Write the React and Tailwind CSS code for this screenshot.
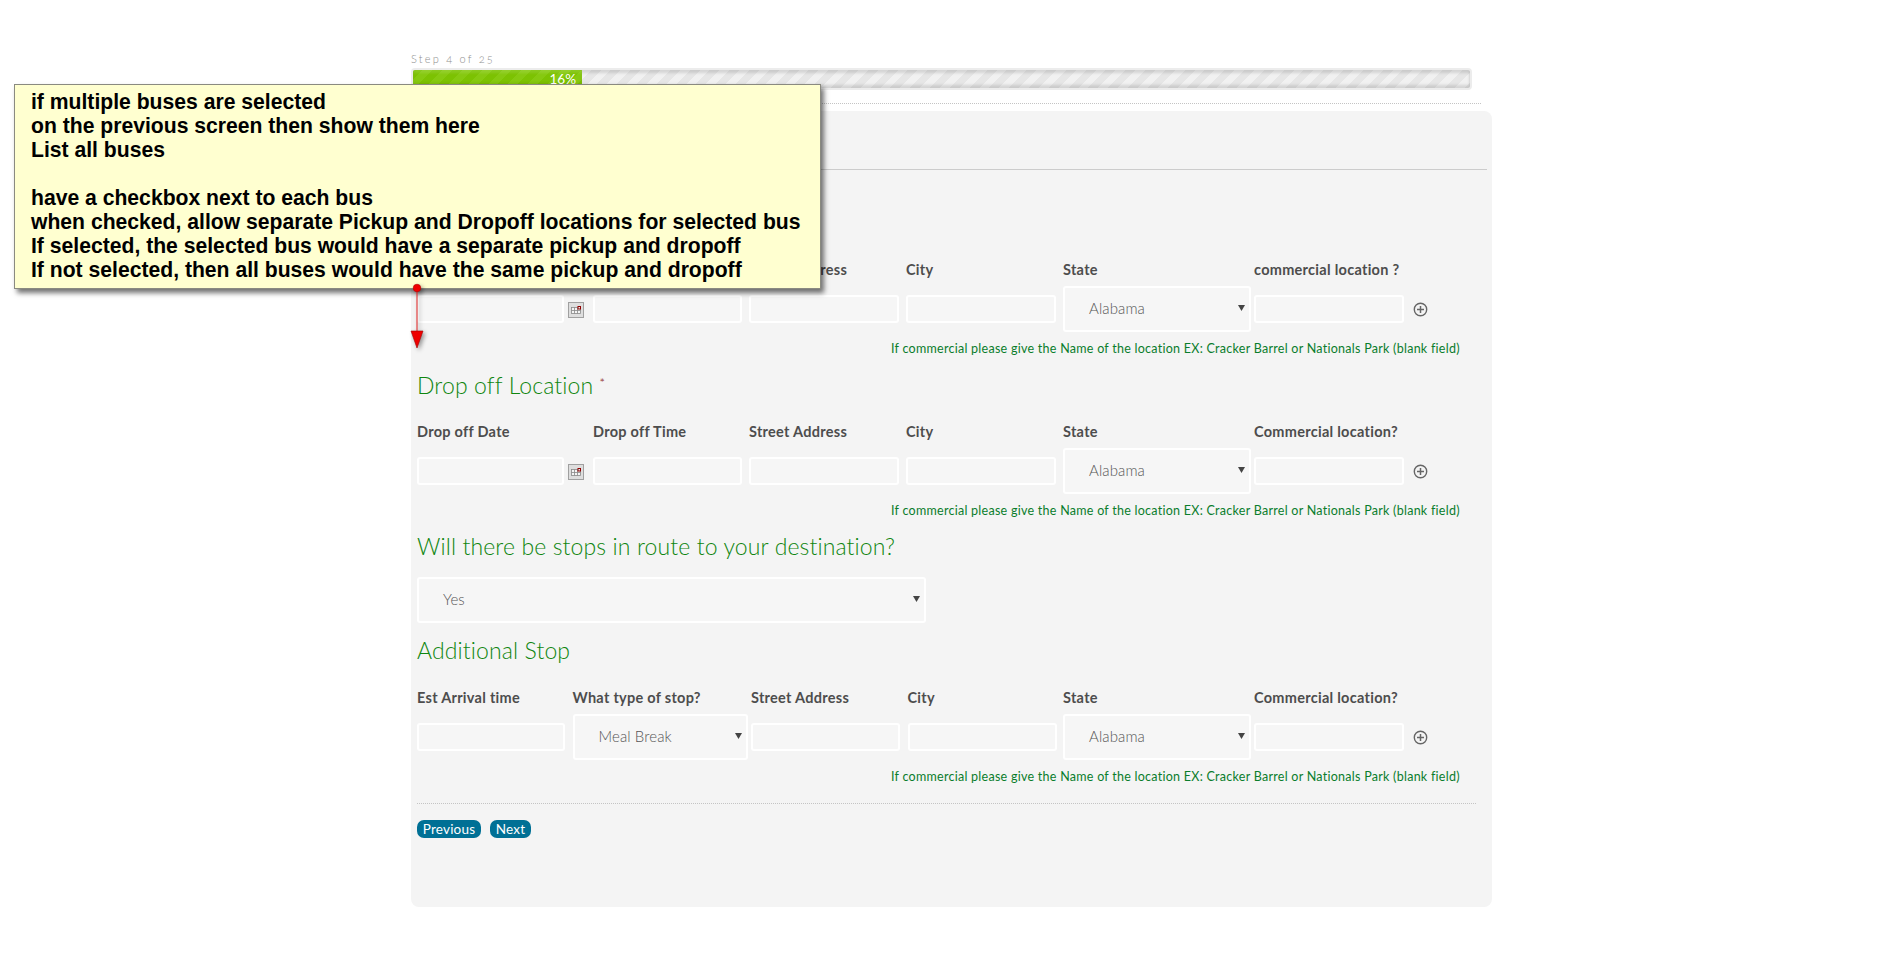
const sans = "font-['Lato','Liberation_Sans',sans-serif]";

function Field({ className = "" }) {
  return <div className={"h-[28px] border-2 border-white rounded-[3px] bg-[#f6f6f6] " + className} />;
}

function Select({ value, className = "" }) {
  return (
    <div className={"h-[46px] border-2 border-white rounded-[3px] bg-[#f6f6f6] flex items-center justify-between pl-[24px] pr-[4px] pb-[1px] text-[15px] tracking-[0.1px] font-light text-[#555] " + className}>
      <span>{value}</span>
      <svg width="7" height="7" viewBox="0 0 7 7" className="mb-[2px]"><path d="M0 1h7L3.5 7z" fill="#444" /></svg>
    </div>
  );
}

function Plus() {
  return (
    <svg width="15" height="15" viewBox="0 0 15 15" className="ml-[9px] mt-[1px] shrink-0">
      <circle cx="7.5" cy="7.5" r="6.2" fill="none" stroke="#666" strokeWidth="1.4" />
      <path d="M7.5 4v7M4 7.5h7" stroke="#666" strokeWidth="1.5" />
    </svg>
  );
}

function Calendar() {
  return (
    <svg width="16" height="16" viewBox="0 0 16 16" className="ml-[4px] mt-[2px] shrink-0">
      <rect x="0.5" y="0.5" width="15" height="15" fill="#dedede" stroke="#a0a0a0" />
      <rect x="3.5" y="5.5" width="9" height="6" fill="#f4f4f4" stroke="#888" strokeWidth="0.8" />
      <path d="M6.5 5.5v6M9.5 5.5v6M3.5 8.5h9" stroke="#888" strokeWidth="0.8" />
      <rect x="10" y="4.5" width="2.5" height="2.5" fill="#e8e8e8" stroke="#900000" strokeWidth="1" />
    </svg>
  );
}

function Heading({ children, star }) {
  return (
    <h2 className="h-[30px] leading-[29px] text-[23px] tracking-[0.12px] font-light text-[#0f860f] whitespace-nowrap">
      {children}
      {star && <span className="ml-[6px] text-[14px] align-[6px] text-[#8a2020]">*</span>}
    </h2>
  );
}

function Help() {
  return (
    <p className="mt-[7px] h-[20px] leading-[20px] pl-[474px] text-[12.5px] tracking-[0.265px] text-[#0a7d2c] whitespace-nowrap">
      If commercial please give the Name of the location EX: Cracker Barrel or Nationals Park (blank field)
    </p>
  );
}

function LabelRow({ cols, labels, top = "mt-[22px]" }) {
  return (
    <div className={"h-[20px] leading-[20px] grid text-[14.5px] tracking-[0.28px] font-bold text-[#4d4d4d] whitespace-nowrap " + top + " " + cols}>
      {labels.map((l, i) => <div key={i}>{l}</div>)}
    </div>
  );
}

function LastCols() {
  return (
    <>
      <div className="pr-[3px]"><Select value="Alabama" /></div>
      <div className="flex items-center"><Field className="w-[150px]" /><Plus /></div>
    </>
  );
}

function LocationBlock({ heading, star, labels, labelTop }) {
  const cols = "grid-cols-[176px_156px_157px_157px_191px_auto]";
  return (
    <section>
      {heading ? <Heading star={star}>{heading}</Heading> : <div className="h-[30px]" />}
      <LabelRow cols={cols} labels={labels} top={labelTop} />
      <div className={"mt-[6px] h-[46px] grid items-center " + cols}>
        <div className="flex items-center"><Field className="w-[147px]" /><Calendar /></div>
        <div><Field className="w-[149px]" /></div>
        <div><Field className="w-[150px]" /></div>
        <div><Field className="w-[150px]" /></div>
        <LastCols />
      </div>
      <Help />
    </section>
  );
}

function Note() {
  const lines = [
    "if multiple buses are selected",
    "on the previous screen then show them here",
    "List all buses",
    "\u00a0",
    "have a checkbox next to each bus",
    "when checked, allow separate Pickup and Dropoff locations for selected bus",
    "If selected, the selected bus would have a separate pickup and dropoff",
    "If not selected, then all buses would have the same pickup and dropoff",
  ];
  return (
    <div className="absolute left-[14px] top-[84px] w-[807px] h-[205px] bg-[#ffffd0] border border-[#8a8a80] shadow-[3px_4px_5px_rgba(0,0,0,0.55)] pl-[16px] pt-[5px] font-['Liberation_Sans',sans-serif] font-bold text-[21.15px] leading-[24px] text-black whitespace-nowrap">
      {lines.map((l, i) => <div key={i}>{l}</div>)}
    </div>
  );
}

function Arrow() {
  return (
    <svg width="24" height="68" viewBox="0 0 24 68" className="absolute left-[405px] top-[283px] drop-shadow-[2px_2px_2px_rgba(0,0,0,0.4)]">
      <line x1="12" y1="5" x2="12" y2="50" stroke="#e02020" strokeWidth="1" />
      <circle cx="12" cy="5" r="3.8" fill="#f00000" stroke="#b00000" strokeWidth="0.6" />
      <path d="M6 48h12l-6 17z" fill="#ee0000" stroke="#a00000" strokeWidth="0.6" />
    </svg>
  );
}

export default function App() {
  const cols3 = "grid-cols-[155.5px_178.5px_156.5px_155.5px_191px_auto]";
  return (
    <div className={"relative min-h-[955px] bg-white " + sans}>
      <div className="ml-[411px] w-[1081px] pt-[52px]">
        <div className="h-[14px] leading-[14px] text-[11px] tracking-[2.2px] font-light text-[#8f8f8f] [font-variant-numeric:oldstyle-nums]">Step 4 of 25</div>
        <div className="mt-[2px] w-[1061px] h-[22px] border-2 border-[#ececec] rounded-[4px] bg-[#e4e4e4] overflow-hidden">
          <div className="h-full w-full bg-[repeating-linear-gradient(135deg,#e6e6e6_0,#e6e6e6_7px,#f1f1f1_7px,#f1f1f1_14px)] shadow-[inset_0_3px_3px_rgba(0,0,0,0.12),inset_0_-3px_3px_rgba(0,0,0,0.12)]">
            <div className="h-full w-[169px] bg-[repeating-linear-gradient(135deg,#7cc202_0,#7cc202_7px,#86c910_7px,#86c910_14px)] shadow-[inset_0_3px_3px_rgba(255,255,255,0.12),inset_0_-4px_3px_rgba(0,0,0,0.12)] text-right pr-[6px] text-[13.5px] leading-[19px] text-white">16%</div>
          </div>
        </div>
        <div className="mt-[13px] mr-[11px] border-t border-dotted border-[#c4c4c4]" />
        <main className="mt-[7px] h-[796px] rounded-[8px] bg-[#f4f4f4] pl-[6px] pr-[5px]">
          <div className="h-[59px] border-b border-[#cccccc]" />
          <div className="pt-[38px]">
            <LocationBlock
              labels={["", "", "Street Address", "City", "State", "commercial location ?"]}
            />
            <div className="mt-[9px]">
              <LocationBlock
                heading="Drop off Location"
                star
                labelTop="mt-[24px]"
                labels={["Drop off Date", "Drop off Time", "Street Address", "City", "State", "Commercial location?"]}
              />
            </div>
            <div className="mt-[11px]"><Heading>Will there be stops in route to your destination?</Heading></div>
            <Select value="Yes" className="mt-[15px] w-[509px]" />
            <div className="mt-[13px]"><Heading>Additional Stop</Heading></div>
            <LabelRow cols={cols3} labels={["Est Arrival time", "What type of stop?", "Street Address", "City", "State", "Commercial location?"]} />
            <div className={"mt-[6px] h-[46px] grid items-center " + cols3}>
              <div><Field className="w-[148px]" /></div>
              <div><Select value="Meal Break" className="w-[175px]" /></div>
              <div><Field className="w-[149px]" /></div>
              <div><Field className="w-[149px]" /></div>
              <LastCols />
            </div>
            <Help />
            <div className="mt-[16px] mr-[11px] border-t border-dotted border-[#c4c4c4]" />
            <div className="mt-[16px] flex gap-[9px]">
              <button className="h-[18px] w-[64px] rounded-[7px] bg-[#007095] text-white text-[13.5px] tracking-[0.2px] leading-[18px]">Previous</button>
              <button className="h-[18px] w-[41px] rounded-[7px] bg-[#007095] text-white text-[13.5px] tracking-[0.2px] leading-[18px]">Next</button>
            </div>
          </div>
        </main>
      </div>
      <Note />
      <Arrow />
    </div>
  );
}
